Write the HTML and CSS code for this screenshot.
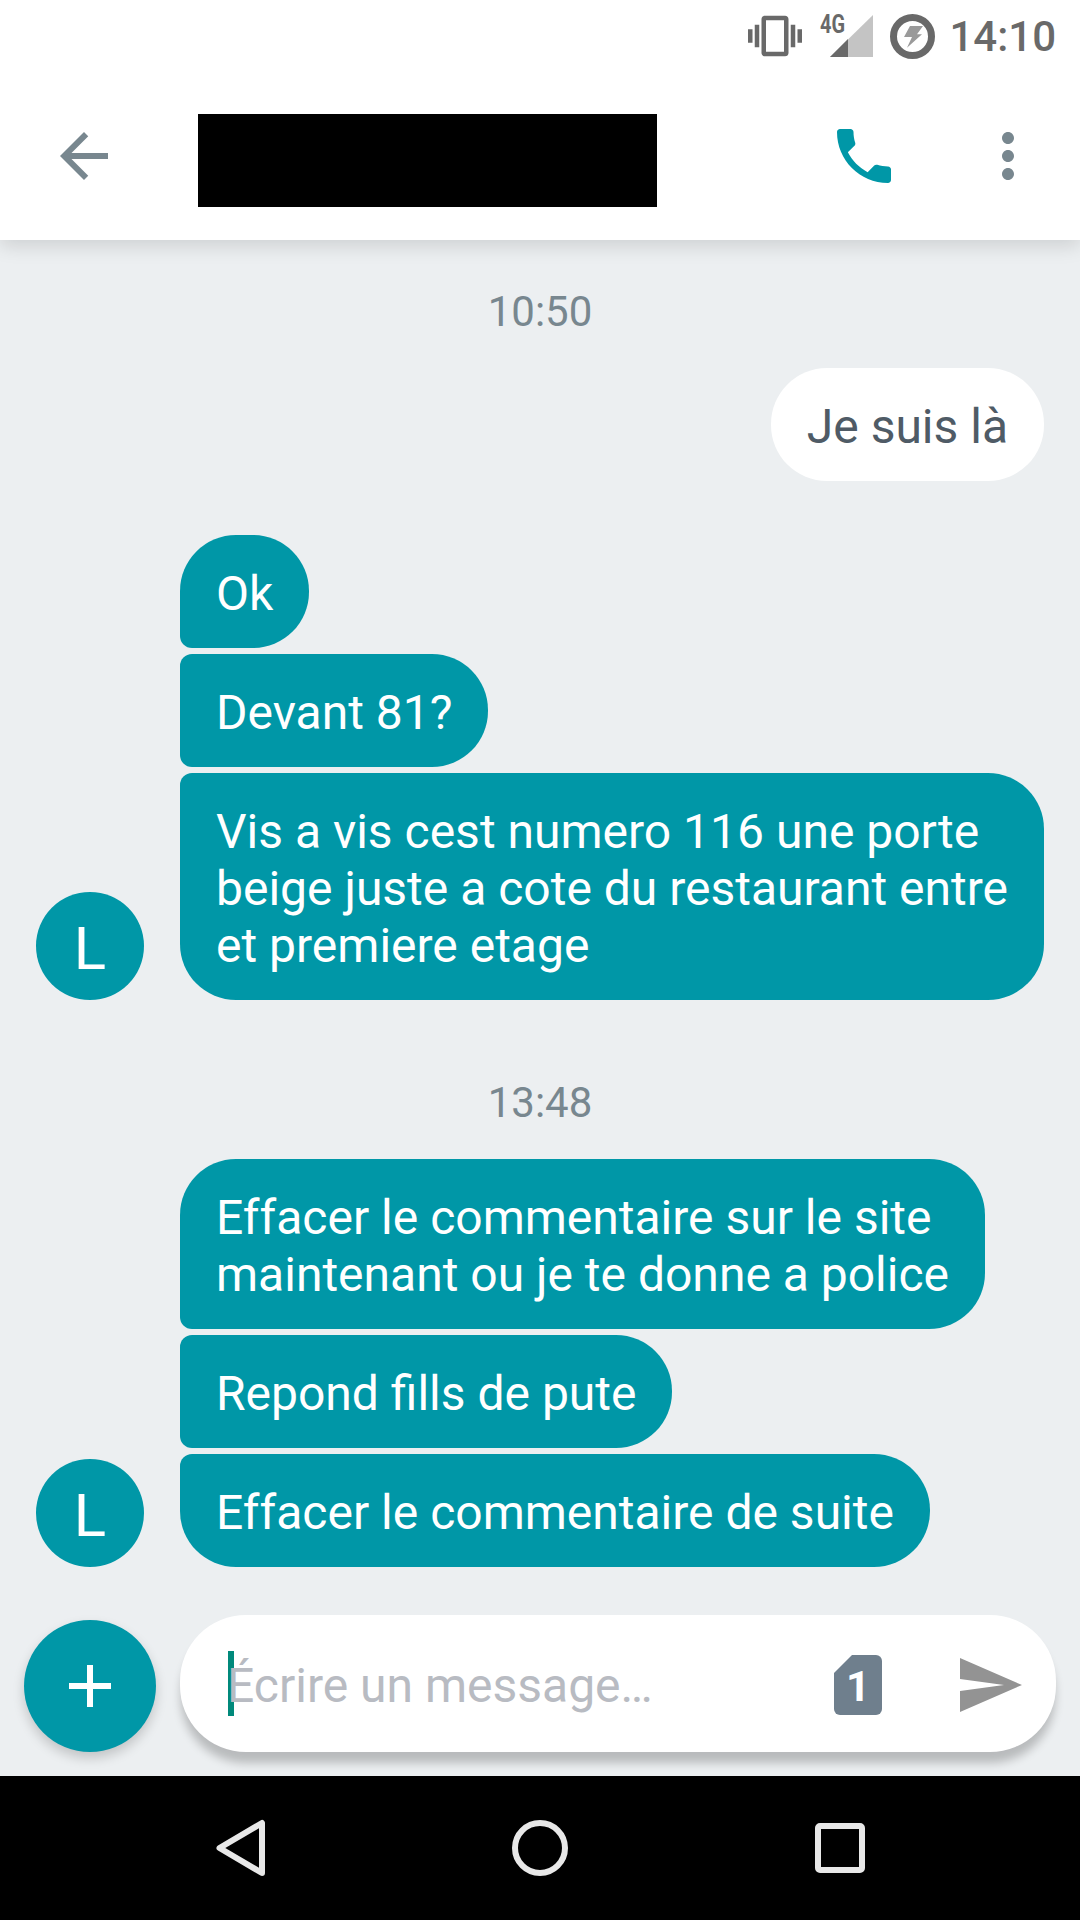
FILE: index.html
```html
<!DOCTYPE html>
<html lang="fr">
<head>
<meta charset="utf-8">
<title>Messages</title>
<link rel="stylesheet" href="styles.css">
</head>
<body>
<div class="screen">
  <header class="status">
    <svg class="st-vibrate" viewBox="0 0 24 24"><path d="M0 15h2V9H0v6zm3 2h2V7H3v10zm19-8v6h2V9h-2zm-3 8h2V7h-2v10zM16.5 3h-9C6.67 3 6 3.67 6 4.5v15c0 .83.67 1.5 1.5 1.5h9c.83 0 1.5-.67 1.5-1.5v-15c0-.83-.67-1.5-1.5-1.5zM16 19H8V5h8v14z"/></svg>
    <svg class="st-signal" viewBox="0 0 53 42"><path class="sig-light" d="M53 0V42H10Z"/><path class="sig-dark" d="M28 24V42H10Z"/><text class="sig-label" x="0" y="18" textLength="25" lengthAdjust="spacingAndGlyphs">4G</text></svg>
    <svg class="st-battery" viewBox="0 0 45 45"><circle class="bat-ring" cx="22.5" cy="22.5" r="19"/><path class="bat-bolt" d="M20 12H33L27 20.3H32L17 33.7 22 23H14Z"/></svg>
    <span class="time">14:10</span>
  </header>

  <nav class="toolbar">
    <svg class="tb-icon tb-back" viewBox="0 0 24 24"><path d="M20 11H7.83l5.59-5.59L12 4l-8 8 8 8 1.41-1.41L7.83 13H20v-2z"/></svg>
    <div class="redacted"></div>
    <svg class="tb-icon tb-call" viewBox="0 0 24 24"><path d="M6.62 10.79c1.44 2.83 3.76 5.14 6.59 6.59l2.2-2.2c.27-.27.67-.36 1.02-.24 1.12.37 2.33.57 3.57.57.55 0 1 .45 1 1V20c0 .55-.45 1-1 1-9.39 0-17-7.61-17-17 0-.55.45-1 1-1h3.5c.55 0 1 .45 1 1 0 1.25.2 2.45.57 3.57.11.35.03.74-.25 1.02l-2.2 2.2z"/></svg>
    <svg class="tb-icon tb-more" viewBox="0 0 24 24"><path d="M12 8c1.1 0 2-.9 2-2s-.9-2-2-2-2 .9-2 2 .9 2 2 2zm0 2c-1.1 0-2 .9-2 2s.9 2 2 2 2-.9 2-2-.9-2-2-2zm0 6c-1.1 0-2 .9-2 2s.9 2 2 2 2-.9 2-2-.9-2-2-2z"/></svg>
  </nav>

  <main class="thread">
    <div class="stamp stamp-first">10:50</div>
    <div class="outgoing"><div class="bubble bubble-out">Je suis là</div></div>

    <div class="group group-first">
      <div class="avatar">L</div>
      <div class="stack">
        <div class="bubble bubble-in first">Ok</div>
        <div class="bubble bubble-in middle">Devant 81?</div>
        <div class="bubble bubble-in last">Vis a vis cest numero 116 une porte<br>beige juste a cote du restaurant entre<br>et premiere etage</div>
      </div>
    </div>

    <div class="stamp stamp-second">13:48</div>
    <div class="group">
      <div class="avatar">L</div>
      <div class="stack">
        <div class="bubble bubble-in first">Effacer le commentaire sur le site<br>maintenant ou je te donne a police</div>
        <div class="bubble bubble-in middle">Repond fills de pute</div>
        <div class="bubble bubble-in last">Effacer le commentaire de suite</div>
      </div>
    </div>
  </main>

  <footer class="composer">
    <div class="fab">
      <svg class="fab-plus" viewBox="0 0 42 42"><path d="M18 0h6v18h18v6H24v18h-6V24H0v-6h18z"/></svg>
    </div>
    <div class="field">
      <span class="caret"></span>
      <span class="placeholder">Écrire un message…</span>
      <svg class="sim" viewBox="0 0 48 60"><path class="sim-body" d="M18 0H42a6 6 0 0 1 6 6V54a6 6 0 0 1-6 6H6a6 6 0 0 1-6-6V18Z"/><text class="sim-label" x="24" y="46">1</text></svg>
      <svg class="send" viewBox="0 0 62 54"><path d="M0 0L62 27 0 54V33L44 27 0 21Z"/></svg>
    </div>
  </footer>

  <div class="navbar">
    <svg class="nav-icon" viewBox="0 0 72 72"><path d="M15.5 36L58 11V61Z"/></svg>
    <svg class="nav-icon" viewBox="0 0 72 72"><circle cx="36" cy="36" r="25"/></svg>
    <svg class="nav-icon" viewBox="0 0 72 72"><rect x="14" y="14" width="44" height="44" rx="2"/></svg>
  </div>
</div>
</body>
</html>
```

FILE: styles.css
```css
* { box-sizing: border-box; }

html, body {
  margin: 0;
  padding: 0;
}

body {
  font-family: Roboto, "Liberation Sans", sans-serif;
  background: #eceff1;
}

.screen {
  width: 1080px;
  height: 1920px;
  display: flex;
  flex-direction: column;
  overflow: hidden;
  background: #eceff1;
}

/* status bar */
.status {
  height: 72px;
  flex: none;
  background: #fff;
  display: flex;
  align-items: center;
  justify-content: flex-end;
  padding-right: 24px;
  position: relative;
  z-index: 3;
}

.st-vibrate { width: 54px; height: 54px; fill: #696969; margin-right: 18px; }
.st-signal { width: 53px; height: 42px; margin-right: 17px; overflow: visible; }
.sig-light { fill: #c4c4c4; }
.sig-dark { fill: #696969; }
.sig-label { font-family: Roboto, sans-serif; font-size: 25px; font-weight: 700; fill: #696969; }
.st-battery { width: 45px; height: 45px; margin-right: 14px; }
.bat-ring { fill: none; stroke: #696969; stroke-width: 7; }
.bat-bolt { fill: #9a9a9a; }
.time { font-size: 42px; font-weight: 500; color: #696969; line-height: 50px; margin-top: 2px; }

/* toolbar */
.toolbar {
  height: 168px;
  flex: none;
  background: #fff;
  display: flex;
  align-items: center;
  padding: 0 36px 0 48px;
  position: relative;
  z-index: 2;
  box-shadow: 0 6px 18px rgba(0, 0, 0, .13);
}

.tb-icon { width: 72px; height: 72px; flex: none; }
.tb-back, .tb-more { fill: #78878f; }
.tb-call { fill: #0097a7; margin-left: auto; margin-right: 72px; }
.redacted {
  width: 459px;
  height: 93px;
  margin-left: 78px;
  margin-top: 9px;
  background: #000;
}

/* thread */
.thread {
  flex: 1;
  display: flex;
  flex-direction: column;
  padding: 0 36px;
}

.stamp {
  text-align: center;
  font-size: 42px;
  line-height: 57px;
  color: #78878f;
  margin-bottom: 28px;
}
.stamp-first { margin-top: 43px; }
.stamp-second { margin-top: 74px; }

.outgoing { display: flex; justify-content: flex-end; }

.bubble {
  font-size: 48px;
  line-height: 57px;
  padding: 30px 36px 26px;
  border-radius: 56px;
  white-space: nowrap;
}
.bubble-out { background: #fff; color: #4f5b66; }
.bubble-in { background: #0097a7; color: #fff; align-self: flex-start; }
.first { border-bottom-left-radius: 12px; }
.middle { border-top-left-radius: 12px; border-bottom-left-radius: 12px; }
.last { border-top-left-radius: 12px; }

.group {
  display: flex;
  align-items: flex-end;
  gap: 36px;
}
.group-first { margin-top: 54px; }

.avatar {
  width: 108px;
  height: 108px;
  flex: none;
  border-radius: 50%;
  background: #0097a7;
  color: #fff;
  font-size: 60px;
  padding-top: 4px;
  display: flex;
  align-items: center;
  justify-content: center;
}

.stack {
  display: flex;
  flex-direction: column;
  gap: 6px;
  min-width: 0;
}

/* composer */
.composer {
  flex: none;
  display: flex;
  align-items: flex-end;
  gap: 24px;
  padding: 0 24px 24px;
}

.fab {
  width: 132px;
  height: 132px;
  flex: none;
  border-radius: 50%;
  background: #0097a7;
  display: flex;
  align-items: center;
  justify-content: center;
  box-shadow: 0 6px 12px rgba(0, 0, 0, .18);
}
.fab-plus { width: 42px; height: 42px; fill: #fff; }

.field {
  flex: 1;
  height: 137px;
  background: #fff;
  border-radius: 66px;
  display: flex;
  align-items: center;
  padding-left: 48px;
  box-shadow: 0 12px 10px -1px rgba(0, 0, 0, .22);
}

.caret {
  width: 6px;
  height: 65px;
  background: #00897b;
  margin-right: -7px;
  flex: none;
}
.placeholder {
  flex: 1;
  font-size: 48px;
  line-height: 57px;
  margin-top: 4px;
  color: #b8bbc2;
}

.sim { width: 48px; height: 60px; flex: none; margin-right: 78px; margin-top: 3px; }
.sim-body { fill: #6f7f8d; }
.sim-label { font-family: Roboto, sans-serif; font-size: 42px; font-weight: 700; fill: #fff; text-anchor: middle; }
.send { width: 62px; height: 54px; flex: none; fill: #939393; margin-right: 34px; margin-top: 3px; }

/* navigation bar */
.navbar {
  height: 144px;
  flex: none;
  background: #000;
  display: flex;
  align-items: center;
  justify-content: space-between;
  padding: 0 204px;
}
.nav-icon {
  width: 72px;
  height: 72px;
  fill: none;
  stroke: #e8e8e8;
  stroke-width: 6;
  stroke-linejoin: round;
}
```
